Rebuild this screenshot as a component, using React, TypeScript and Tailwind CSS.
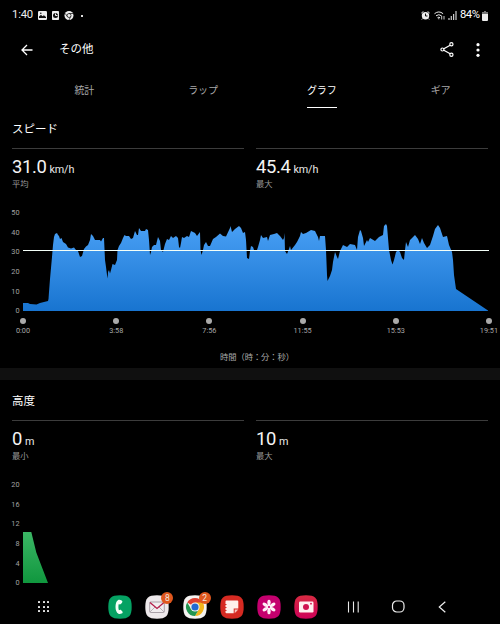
import React from "react";

const speedPoints =
  "23,311 23,303 28,303 30,304 36.5,304.5 40,303 48,301 48.5,299 49,292 50,279 52,257 53,245 54,237 55,234 57,233 58,235 59,236 60,239 61.5,238 63,242 66,244 68,247.5 71,248.5 74,247.5 76,250 78,251 80,257 82,256 84,249 86,246.5 88,245 90,240 91,234 93,236 95,240 100,240 101,241.5 103,238 104,238 105,260 106,267 107,275 107.7,278.5 108,272 109,270 110,273.5 111,270 112.5,264 115,265 117,260 117.5,250 119,246 121,243 123,238 124.5,235 126,236 129,236 131,239 133,238 135,231 137,235 138,235 139,228 141,231 145,231 146,229 148,230 149,240 150,255 151,252 152,247 154,245 156,245 158,237 160,241 161,250 163,252 165,244 167,239 169,240 171,236 173,238 176,236 178,238 179,247 180,248 181,243 182,237 184,238 187,236 189,237 191,231 195,233 197,236 200,232 200.5,250 201.5,255 203,250 204,245 206,242 208,246 210,246 213,239 216,237 220,233.5 223,236 226,236.5 230,228 230.5,226 232,232 235,229 239,226 241,228 243,233 245,232 246,240 247,258 249,259 250,251 251,246 253,247 254,250 257,250 258,247 260,240 261,235 263,238 267,237 268,241 270,235 274,234 277,233 280,236 283,240 284,238 284.5,233 285,251 287,254 289,249 290,246 291,250 295,245 297,242 300,236 301,232 303,234 306,233 311,230 315,231 318,237 319,241 320,236 325,236 326,250 327,275 327.5,281 330,276 332,270 333,262 335,252 337,257 338,259 340,251 343,245 347,247 350,244 355,245 357,250 358,237 360,230 361,231 363,238 364,246 367,240 368,242 370,238 375,241 379,237 383,235 384,226 386,224 387,226 388,238 389,250 391,260 392.5,264.5 394,260 396,252 398,250 400,252 402,258 404,260 405,250 406,242 408,247 410,240 415,235 418,239 420,244 422,238 424,243 427,248 430,245 433,236 435,229 438,225 440,228 443,237 447,236 449,245 452,252 453,260 454,275 456,289 488,310.5 488,311";

function Stat({ value, unit, label }: { value: string; unit: string; label: string }) {
  return (
    <div className="w-[232px] border-t border-[#3c3c3c] pt-[7px]">
      <div className="flex h-[22px] items-baseline whitespace-nowrap">
        <span className="text-[18.4px] leading-[22px] tracking-[-0.35px] text-[#f4f4f4]">{value}</span>
        <span className="ml-[3px] text-[10.8px] tracking-[-0.15px] text-[#e8e8e8]">{unit}</span>
      </div>
      <div className="text-[8.3px] leading-[13px] text-[#9a9a9a]">{label}</div>
    </div>
  );
}

function Axis({ values }: { values: number[] }) {
  return (
    <div className="w-[23px] pr-[3.5px] text-right text-[7.3px] text-[#a2a2a2]">
      {values.map((v) => (
        <div key={v} className="h-[19.7px] leading-[19.7px]">{v}</div>
      ))}
    </div>
  );
}

function StatusIcons() {
  return (
    <div className="ml-[5px] flex items-center gap-[5px]">
      <svg width="9" height="9" viewBox="0 0 9 9">
        <rect width="9" height="9" rx="1.2" fill="#eee" />
        <path d="M1 7V5.5l2-1.7 1.5 1.4 1.4-1L8 6v1z" fill="#111" />
        <circle cx="2.8" cy="2.3" r=".8" fill="#111" />
      </svg>
      <svg width="7" height="9" viewBox="0 0 7 9">
        <rect width="7" height="9" rx=".8" fill="#eee" />
        <circle cx="3.5" cy="4.5" r="2.5" fill="#111" />
        <path d="M3.5 2.5v2h2" stroke="#eee" fill="none" />
      </svg>
      <svg width="10" height="9" viewBox="0 0 10 9">
        <circle cx="5" cy="4.5" r="4.5" fill="#eee" />
        <circle cx="5" cy="4.5" r="2" fill="#eee" stroke="#222" strokeWidth=".8" />
        <path d="M5 2.5h4M3.3 5.5 1.2 2.4M6.7 5.5 5 9" stroke="#222" strokeWidth=".8" />
      </svg>
      <span className="ml-[2px] h-[2px] w-[2px] bg-[#ddd]" />
    </div>
  );
}

function AppIcon({ badge, children }: { badge?: string; children: React.ReactNode }) {
  return (
    <div className="relative h-6 w-6">
      <svg width="24" height="24" viewBox="0 0 24 24">{children}</svg>
      {badge && (
        <span className="absolute -top-[3px] left-[16px] h-[12px] w-[12px] rounded-full bg-[#df571d] text-center text-[8.5px] leading-[12px] text-[#f4e6df]">
          {badge}
        </span>
      )}
    </div>
  );
}

function Squircle({ fill }: { fill: string }) {
  return <path d="M12 .3C21 .3 23.7 3 23.7 12S21 23.7 12 23.7.3 21 .3 12 3 .3 12 .3z" fill={fill} />;
}

function NavBar() {
  return (
    <nav className="flex h-[39px] items-center pt-[4px]">
      <div className="ml-[38px] grid w-[11px] grid-cols-3 gap-x-[2.5px] gap-y-[2.5px]">
        {Array.from({ length: 9 }, (_, i) => (
          <span key={i} className="h-[2px] w-[2px] rounded-[0.5px] bg-[#e6e6e6]" />
        ))}
      </div>
      <div className="ml-[59px] flex gap-[13.3px]">
        <AppIcon>
          <Squircle fill="#05a263" />
          <path d="M9.9 5.2c-1.6 1.1-2.4 3.6-2.4 6.7s1 5.6 2.9 6.8c.9.5 2.2.4 3.2-.1 1.2-.6 1.4-1.6.6-2.4l-1-1c-.7-.6-1.5-.4-2.3.1-.6-1.7-.7-4.2-.1-6.2.9.5 1.6.3 2.3-.4l.9-1c.7-.8.5-1.6-.4-2.1-1.1-.7-2.5-1.1-3.7-.4z" fill="#f5fff9" />
        </AppIcon>
        <AppIcon badge="8">
          <Squircle fill="#eee9eb" />
          <rect x="4.7" y="7" width="14.6" height="10.5" rx=".7" fill="#f1edef" stroke="#aaa1a8" strokeWidth="1" />
          <path d="m5 17 5-5m9 5-5-5" stroke="#aaa1a8" strokeWidth=".8" />
          <path d="m5 7.4 7 6 7-6" fill="none" stroke="#b51c48" strokeWidth="1.3" />
        </AppIcon>
        <AppIcon badge="2">
          <Squircle fill="#f5f3f1" />
          <path d="M12 12 4.2 7.5a9 9 0 0 1 15.6 0z" fill="#df3e31" />
          <path d="M12 12V7.5h7.8A9 9 0 0 1 12 21l3.9-6.8z" fill="#f2b51b" />
          <path d="M12 21A9 9 0 0 1 4.2 7.5L8.1 14l7.8.2z" fill="#229650" />
          <circle cx="12" cy="12" r="4.6" fill="#f5f3f1" />
          <circle cx="12" cy="12" r="3.6" fill="#2269d2" />
        </AppIcon>
        <AppIcon>
          <Squircle fill="#d62a22" />
          <path d="M6.5 5.5h10.8q1 0 1 1v7h-4.6v4.8H6.5q-1 0-1-1v-1.2h1v-1h-1v-2h1v-1h-1v-2h1v-1h-1V6.5q0-1 1-1z" fill="#fff0eb" />
          <path d="M14.7 14.5h3.6l-3.6 3.8z" fill="#f7c6bd" />
        </AppIcon>
        <AppIcon>
          <Squircle fill="#c5006e" />
          {[0, 60, 120, 180, 240, 300].map((angle) => (
            <ellipse key={angle} cx="12" cy="7.6" rx="1.7" ry="2.9" fill="#fff0f6" transform={`rotate(${angle} 12 12)`} />
          ))}
          <circle cx="12" cy="12" r="2.4" fill="#fff0f6" />
          <circle cx="12" cy="12" r="1.1" fill="#c5006e" />
        </AppIcon>
        <AppIcon>
          <defs>
            <linearGradient id="cameraRed" x1="0" y1="0" x2="0" y2="1">
              <stop stopColor="#d82b42" />
              <stop offset="1" stopColor="#cd0058" />
            </linearGradient>
          </defs>
          <Squircle fill="url(#cameraRed)" />
          <rect x="5" y="6.5" width="14.5" height="11" rx="1.2" fill="#fff0ef" />
          <circle cx="12" cy="12" r="3" fill="#d01450" />
          <circle cx="17" cy="8.7" r=".9" fill="#d01450" />
        </AppIcon>
      </div>
      <svg className="ml-[29px]" width="12" height="12" viewBox="0 0 12 12">
        <path d="M1.5.5v11M6.5.5v11M11.2.5v11" stroke="#e9e9e9" strokeWidth="1.1" />
      </svg>
      <svg className="ml-[32px]" width="14" height="13" viewBox="0 0 14 13">
        <rect x="1.5" y="1" width="11.5" height="11" rx="4.2" fill="none" stroke="#eee" strokeWidth="1.2" />
      </svg>
      <svg className="ml-[33px]" width="9" height="12" viewBox="0 0 9 12">
        <path d="m7.3.7-6 5.3 6 5.3" fill="none" stroke="#eee" strokeWidth="1.2" />
      </svg>
    </nav>
  );
}

const ticks = ["0:00", "3:58", "7:56", "11:55", "15:53", "19:51"];

export default function App() {
  return (
    <main className="flex h-[624px] w-[500px] flex-col overflow-hidden bg-black font-[Roboto,'Noto_Sans_CJK_JP',sans-serif] text-white">
      <div className="flex h-[31px] items-center justify-between pl-[12px] pr-[12px]">
        <div className="flex items-center">
          <span className="w-[21px] text-[11.3px] tracking-[-0.2px] text-[#eee]">1:40</span>
          <StatusIcons />
        </div>
        <div className="flex items-center">
          <svg width="9" height="9" viewBox="0 0 9 9">
            <path d="m.4 2 2-1.5m6.2 1.5-2-1.5M1.8 7.5l-1 1M7.2 7.5l1 1" stroke="#eee" />
            <circle cx="4.5" cy="4.8" r="3.7" fill="#eee" />
            <path d="M4.5 2.6V5h2" fill="none" stroke="#111" />
          </svg>
          <svg className="ml-[4px]" width="11" height="9" viewBox="0 0 11 9">
            <path d="M.5 2.7q4.3-3.5 8.6 0M2 4.8q2.8-2.2 5.6 0M3.5 6.7q1.3-1 2.6 0" fill="none" stroke="#eee" strokeWidth="1" />
            <path d="M4.8 6.3v2M7.7 5v3.5M10 5v3.5" stroke="#ccc" />
          </svg>
          <svg className="ml-[3px]" width="9" height="9" viewBox="0 0 9 9">
            <path d="M1 7v2M3.3 5v4M5.6 3v6M8 0v9" stroke="#ccc" strokeWidth="1.2" />
          </svg>
          <span className="ml-[3px] w-[22px] whitespace-nowrap text-[11.3px] tracking-[-0.5px]">84%</span>
          <svg width="6" height="10" viewBox="0 0 6 10">
            <path d="M2 0h2v1h2v2H0V1h2z" fill="#777" />
            <path d="M0 3h6v6q0 1-1 1H1q-1 0-1-1z" fill="#eee" />
          </svg>
        </div>
      </div>
      <header className="flex h-[37px] items-center pl-[21px] pr-[20px]">
        <svg width="12" height="12" viewBox="0 0 12 12">
          <path d="M11.5 6H1m5-5L1 6l5 5" fill="none" stroke="#fff" strokeWidth="1.3" />
        </svg>
        <h1 className="ml-[26px] flex-1 pt-[1px] text-[11.5px]">その他</h1>
        <svg width="14" height="15" viewBox="0 0 14 15">
          <path d="m2.5 7.5 9-5m-9 5 9 5" stroke="#fff" strokeWidth="1.3" />
          <g fill="#000" stroke="#fff" strokeWidth="1.2">
            <circle cx="2.4" cy="7.5" r="1.5" />
            <circle cx="11.4" cy="2.3" r="1.6" />
            <circle cx="11.4" cy="12.7" r="1.6" />
          </g>
        </svg>
        <svg className="ml-[22px]" width="4" height="14" viewBox="0 0 4 14">
          <g fill="#fff">
            <circle cx="2" cy="1.7" r="1.6" />
            <circle cx="2" cy="7" r="1.6" />
            <circle cx="2" cy="12.3" r="1.6" />
          </g>
        </svg>
      </header>
      <div className="grid h-[40px] grid-cols-4 pl-[25px] pt-[13px] text-center text-[10px] leading-[20px] text-[#a9a9a9]">
        <span>統計</span>
        <span>ラップ</span>
        <span className="text-white">
          <span className="inline-block h-[27px] w-[30px] whitespace-nowrap border-b border-white">グラフ</span>
        </span>
        <span>ギア</span>
      </div>
      <section className="h-[260px] shrink-0">
        <h2 className="ml-[12px] h-[40px] pt-[11px] text-[11.5px] leading-[20px]">スピード</h2>
        <div className="flex gap-[12px] pl-[12px]">
          <Stat value="31.0" unit="km/h" label="平均" />
          <Stat value="45.4" unit="km/h" label="最大" />
        </div>
        <div className="mt-[12px] flex h-[115px]">
          <Axis values={[50, 40, 30, 20, 10, 0]} />
          <svg className="mt-[2px]" width="467" height="106" viewBox="23 205 467 106">
            <defs>
              <linearGradient id="speed" gradientUnits="userSpaceOnUse" x1="0" y1="224" x2="0" y2="311">
                <stop stopColor="#49a0f5" />
                <stop offset="1" stopColor="#1874d0" />
              </linearGradient>
            </defs>
            <polygon points={speedPoints} fill="url(#speed)" />
            <path d="M23 250.5h466" stroke="#f4fff8" />
          </svg>
        </div>
        <div className="ml-[23px] flex w-[466px] justify-between">
          {ticks.map((t) => (
            <div key={t} className="flex w-0 flex-col items-center whitespace-nowrap text-[7.3px] leading-[9px] text-[#a9a9a9]">
              <i className="mb-[2px] h-[6px] w-[6px] shrink-0 rounded-full bg-[#aaa]" />
              {t}
            </div>
          ))}
        </div>
        <p className="ml-[14px] mt-[14px] text-center text-[8.3px] leading-[16px] tracking-[-0.1px] text-[#aaa]">時間（時：分：秒）</p>
      </section>
      <div className="h-[12px] shrink-0 bg-[#101010]" />
      <section className="h-[205px] shrink-0">
        <h2 className="ml-[12px] h-[40px] pt-[11px] text-[11.5px] leading-[20px]">高度</h2>
        <div className="flex gap-[12px] pl-[12px]">
          <Stat value="0" unit="m" label="最小" />
          <Stat value="10" unit="m" label="最大" />
        </div>
        <div className="mt-[12px] flex">
          <Axis values={[20, 16, 12, 8, 4, 0]} />
          <svg className="mt-[57px]" width="26" height="51" viewBox="0 0 26 51">
            <defs>
              <linearGradient id="altitude" x1="0" y1="0" x2="0" y2="1">
                <stop stopColor="#3bb665" />
                <stop offset="1" stopColor="#10973e" />
              </linearGradient>
            </defs>
            <path d="M0 0h8.3l5 20.5L25 51H0z" fill="url(#altitude)" />
          </svg>
        </div>
      </section>
      <NavBar />
    </main>
  );
}
